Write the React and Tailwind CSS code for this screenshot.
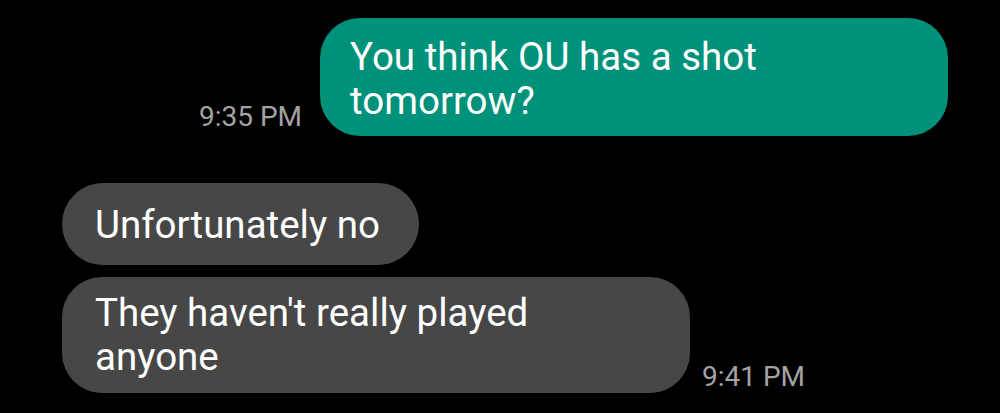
export default function App() {
  return (
    <div className="w-[1000px] h-[413px] bg-black overflow-hidden font-['Roboto',sans-serif] flex flex-col">
      <div className="flex justify-end items-end gap-[18px] pt-[18px] pr-[52px]">
        <span className="text-[28px] leading-[32px] text-[#a3a3a3] mb-[3px]">9:35 PM</span>
        <div className="w-[628px] rounded-[40px] bg-[#00917a] text-white text-[38.5px] leading-[44px] pl-[30px] pr-[24px] pt-[17px] pb-[13px]">
          You think OU has a shot
          <br />
          tomorrow?
        </div>
      </div>
      <div className="flex flex-col gap-[12px] pl-[62px] mt-[47px]">
        <div className="self-start rounded-[41px] bg-[#474747] text-white text-[38.5px] leading-[44px] pl-[33px] pr-[39px] pt-[20px] pb-[18px]">
          Unfortunately no
        </div>
        <div className="flex items-end gap-[12px]">
          <div className="w-[628px] rounded-[40px] bg-[#474747] text-white text-[38.5px] leading-[44px] px-[33px] py-[14px]">
            They haven't really played
            <br />
            anyone
          </div>
          <span className="text-[28px] leading-[32px] text-[#a3a3a3]">9:41 PM</span>
        </div>
      </div>
    </div>
  );
}
